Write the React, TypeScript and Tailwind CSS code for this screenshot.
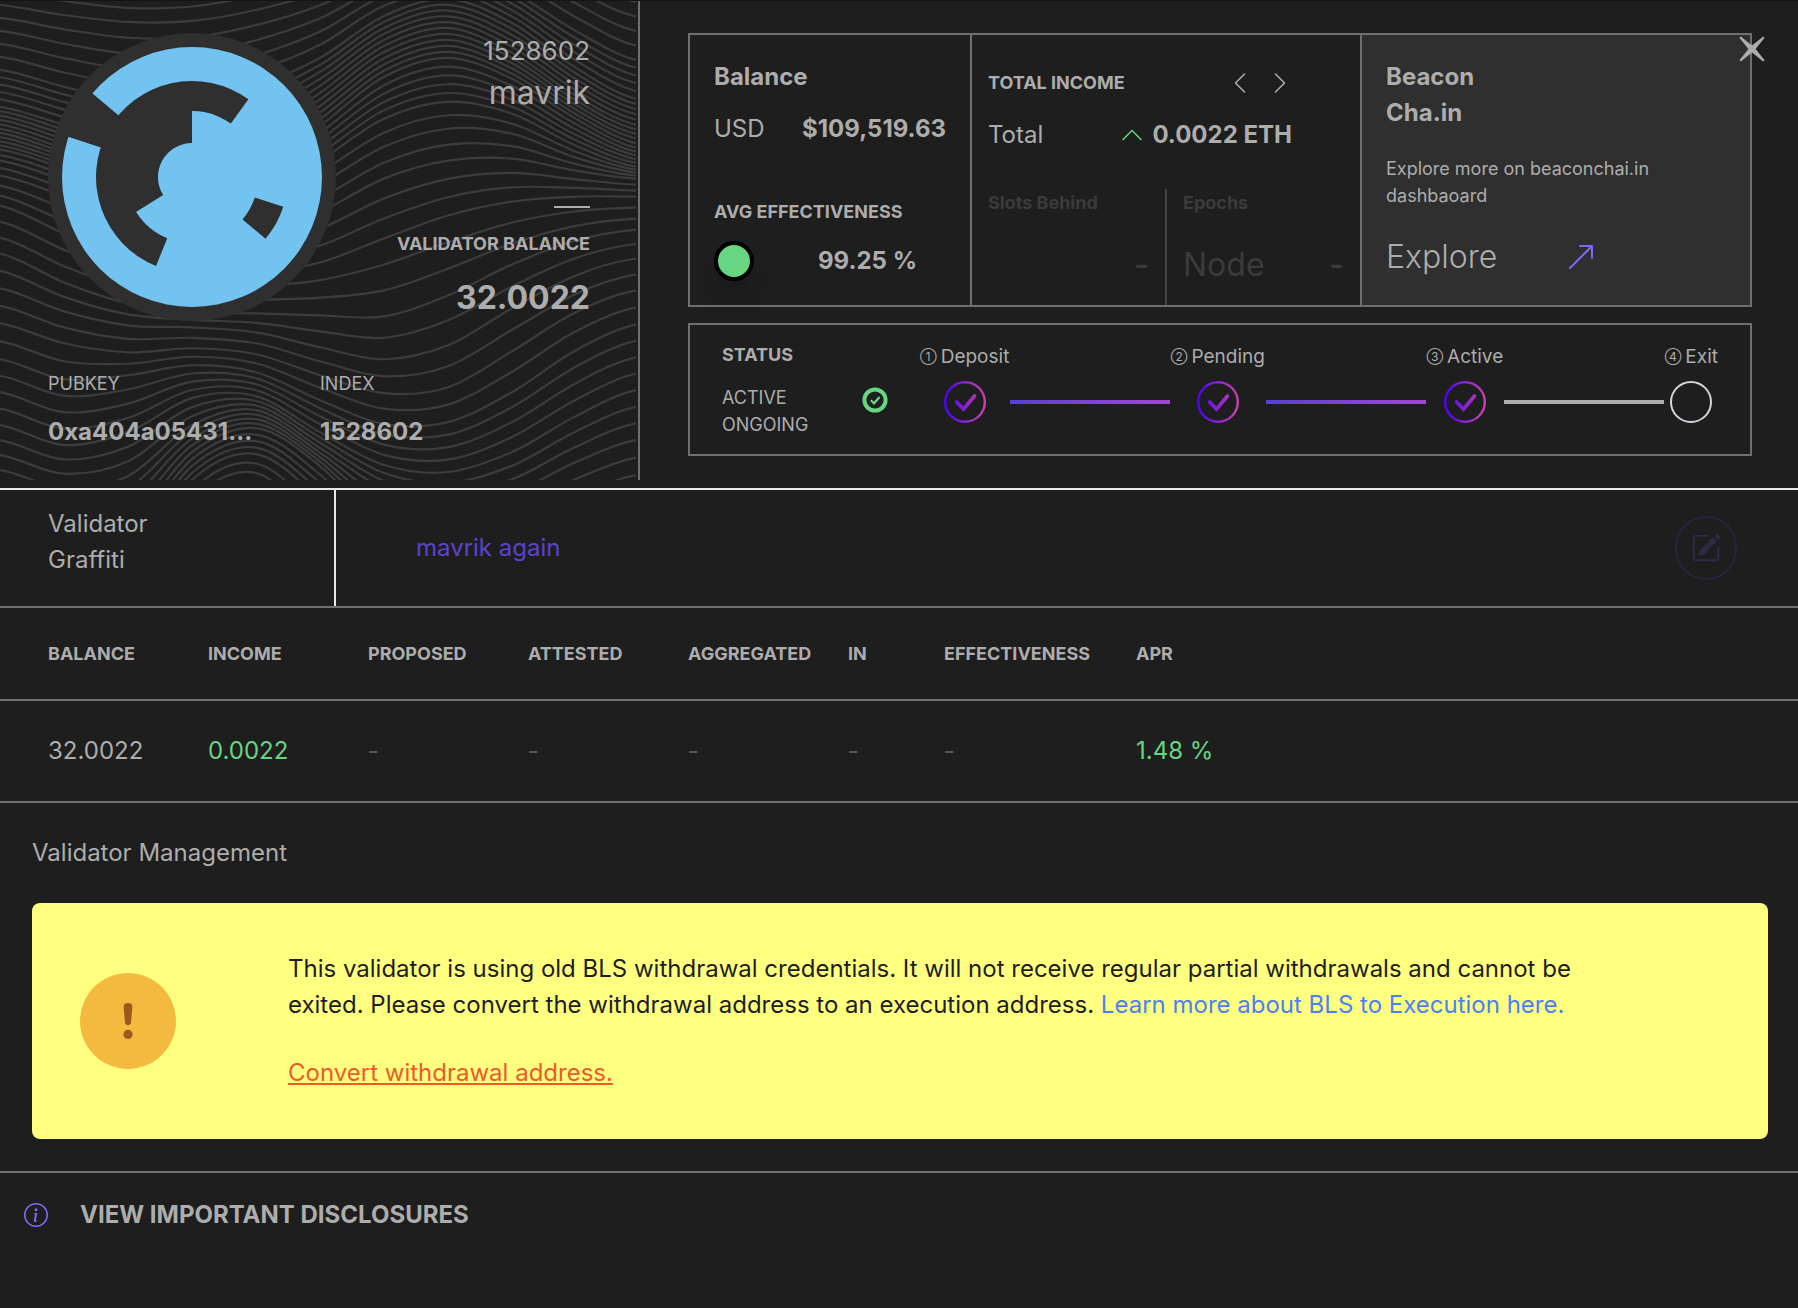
import { Fragment } from "react";
import { BsArrowUpRight, BsChevronLeft, BsChevronRight, BsChevronUp, BsInfoCircle, BsPencilSquare } from "react-icons/bs";

// [line index, height of the line at each of the WAVE_X stops]
const WAVE_X = [0, 64, 128, 192, 256, 320, 384, 448, 512, 576, 636];
const WAVE_KEYS: [number, number[]][] = [
  [-4, [-50, -42, -36, -38, -50, -68, -85, -88, -62, -25, 1]],
  [0, [4, 14, 21, 20, 9, -9, -36, -40, -10, 30, 59]],
  [5, [69, 86, 100, 102, 85, 57, 15, -2, 22, 67, 98]],
  [10, [106, 124, 142, 150, 132, 92, 45, 27, 52, 95, 124]],
  [15, [128, 148, 170, 180, 168, 125, 76, 57, 78, 118, 147]],
  [20, [149, 168, 192, 206, 198, 160, 118, 101, 113, 145, 166]],
  [22, [160, 180, 205, 222, 217, 184, 146, 128, 133, 157, 172]],
  [24, [175, 196, 225, 243, 241, 212, 178, 160, 158, 170, 178]],
  [27, [205, 233, 258, 272, 272, 262, 238, 215, 201, 196, 196]],
  [30, [253, 282, 303, 312, 313, 315, 316, 295, 264, 240, 229]],
  [32, [288, 311, 325, 327, 332, 347, 359, 345, 308, 275, 258]],
  [34, [323, 343, 352, 348, 354, 375, 393, 387, 351, 312, 290]],
  [36, [359, 379, 375, 365, 372, 400, 424, 422, 392, 350, 324]],
  [40, [425, 445, 432, 398, 396, 432, 465, 472, 452, 416, 390]],
  [43, [470, 488, 476, 425, 410, 448, 489, 505, 493, 462, 440]],
  [47, [530, 545, 525, 452, 428, 466, 530, 555, 555, 530, 510]],
  [51, [590, 600, 570, 480, 454, 500, 570, 610, 610, 595, 580]],
  [55, [650, 650, 620, 520, 492, 560, 640, 670, 670, 660, 650]],
];

function smoothPath(ys: number[]) {
  let d = `M${WAVE_X[0]} ${ys[0]}`;
  for (let i = 0; i < ys.length - 1; i++) {
    const dx = (WAVE_X[i + 1] - WAVE_X[i]) / 3;
    const before = ys[Math.max(i - 1, 0)];
    const after = ys[Math.min(i + 2, ys.length - 1)];
    const c1 = ys[i] + (ys[i + 1] - before) / 6;
    const c2 = ys[i + 1] - (after - ys[i]) / 6;
    d += `C${WAVE_X[i] + dx} ${c1.toFixed(1)} ${WAVE_X[i + 1] - dx} ${c2.toFixed(1)} ${WAVE_X[i + 1]} ${ys[i + 1].toFixed(1)}`;
  }
  return d;
}

const wavePaths = WAVE_KEYS.slice(0, -1).flatMap(([start, from], k) => {
  const [end, to] = WAVE_KEYS[k + 1];
  return Array.from({ length: end - start }, (_, n) =>
    smoothPath(from.map((y, i) => y + ((to[i] - y) * n) / (end - start)))
  );
});

function Waves() {
  return (
    <svg className="absolute inset-0 w-full h-full pr-0.5" viewBox="0 0 636 480" preserveAspectRatio="none" aria-hidden="true">
      <g fill="none" stroke="#3c3c3c" strokeWidth="2.2">
        {wavePaths.map((d, i) => (
          <path key={i} d={d} />
        ))}
      </g>
    </svg>
  );
}

// Ring segment between two angles, measured clockwise from the top
function segment(inner: number, outer: number, from: number, to: number) {
  const point = (r: number, deg: number) => {
    const a = (deg * Math.PI) / 180;
    return `${(r * Math.sin(a)).toFixed(2)} ${(-r * Math.cos(a)).toFixed(2)}`;
  };
  const large = to - from > 180 ? 1 : 0;
  return `M${point(outer, from)}A${outer} ${outer} 0 ${large} 1 ${point(outer, to)}L${point(inner, to)}A${inner} ${inner} 0 ${large} 0 ${point(inner, from)}Z`;
}

function Avatar() {
  return (
    <svg className="w-72 h-72 shrink-0" viewBox="-144 -144 288 288" role="img" aria-label="Validator avatar">
      <circle r="144" fill="#2f2f2f" />
      <circle r="130" fill="#72c3ef" />
      <g fill="#2f2f2f">
        <path d={segment(95, 131, 288, 310)} />
        <path d={segment(66, 96, 202, 396)} />
        <path d={segment(34, 67, 238, 360)} />
        <path d={segment(66, 96, 108, 130)} />
      </g>
    </svg>
  );
}

function StepIcon({ id, done }: { id: string; done: boolean }) {
  if (!done) return <div className="w-[42px] h-[42px] rounded-full border-2 border-gray-300" />;
  return (
    <svg className="w-[42px] h-[42px]" viewBox="0 0 42 42" fill="none" aria-hidden="true">
      <defs>
        <linearGradient id={id} x1="0" y1="0" x2="42" y2="0" gradientUnits="userSpaceOnUse">
          <stop stopColor="#4a00ff" />
          <stop offset="1" stopColor="#cc44aa" />
        </linearGradient>
      </defs>
      <circle cx="21" cy="21" r="19.8" stroke={`url(#${id})`} strokeWidth="2.4" />
      <path d="M12.5 21L19.5 28L30.5 15" stroke={`url(#${id})`} strokeWidth="3.6" strokeLinecap="round" />
    </svg>
  );
}

const steps = [
  { mark: "①", name: "Deposit", done: true },
  { mark: "②", name: "Pending", done: true },
  { mark: "③", name: "Active", done: true },
  { mark: "④", name: "Exit", done: false },
];

const columns = [
  { title: "BALANCE", value: "32.0022", tone: "text-[#adadad]" },
  { title: "INCOME", value: "0.0022", tone: "text-[#68d583]" },
  { title: "PROPOSED", value: "-", tone: "text-[#5a5a5a]" },
  { title: "ATTESTED", value: "-", tone: "text-[#5a5a5a]" },
  { title: "AGGREGATED", value: "-", tone: "text-[#5a5a5a]" },
  { title: "IN", value: "-", tone: "text-[#5a5a5a]" },
  { title: "EFFECTIVENESS", value: "-", tone: "text-[#5a5a5a]" },
  { title: "APR", value: "1.48 %", tone: "text-[#68d583]" },
];

function Profile() {
  return (
    <section className="relative w-[640px] shrink-0 h-[479px] border-r-2 border-[#6f6f6f] px-12 pt-8">
      <Waves />
      <div className="relative flex justify-between">
        <Avatar />
        <div className="flex flex-col items-end text-right">
          <p className="text-[26px] leading-9">1528602</p>
          <p className="text-[32px] leading-[48px]">mavrik</p>
          <div className="w-9 h-0.5 bg-[#adadad] mt-[89px]" />
          <p className="text-[18px] leading-7 font-bold mt-[22px]">VALIDATOR BALANCE</p>
          <p className="text-[32px] leading-[48px] font-bold mt-4">32.0022</p>
        </div>
      </div>
      <dl className="relative flex mt-12">
        <div className="w-[272px]">
          <dt className="text-[18px] leading-7">PUBKEY</dt>
          <dd className="text-[24px] leading-9 font-bold mt-4">0xa404a05431...</dd>
        </div>
        <div>
          <dt className="text-[18px] leading-7">INDEX</dt>
          <dd className="text-[24px] leading-9 font-bold mt-4">1528602</dd>
        </div>
      </dl>
    </section>
  );
}

function Summary() {
  return (
    <div className="flex h-[274px] border-2 border-[#6f6f6f]">
      <div className="w-[282px] shrink-0 border-r-2 border-[#6f6f6f] px-6 pt-6">
        <h2 className="text-[24px] leading-9 font-bold">Balance</h2>
        <div className="flex items-center justify-between mt-4">
          <span className="text-[24px] leading-9">USD</span>
          <span className="text-[24px] leading-9 font-bold">$109,519.63</span>
        </div>
        <h3 className="text-[18px] leading-7 font-bold mt-[51px]">AVG EFFECTIVENESS</h3>
        <div className="flex items-center gap-16 mt-[15px]">
          <div className="w-10 h-10 rounded-full border-4 border-black bg-[#68d583] shadow-xl" />
          <span className="text-[24px] leading-9 font-bold">99.25 %</span>
        </div>
      </div>
      <div className="w-[390px] shrink-0 border-r-2 border-[#6f6f6f] flex flex-col">
        <div className="flex items-center px-4 pt-[34px]">
          <h3 className="text-[18px] leading-7 font-bold grow">TOTAL INCOME</h3>
          <div className="flex gap-4 pr-[52px]">
            <button type="button" aria-label="Previous">
              <BsChevronLeft className="w-6 h-6" />
            </button>
            <button type="button" aria-label="Next">
              <BsChevronRight className="w-6 h-6" />
            </button>
          </div>
        </div>
        <div className="flex items-center px-4 mt-5">
          <span className="text-[24px] leading-9 grow">Total</span>
          <BsChevronUp className="w-6 h-6 text-[#68d583]" />
          <span className="text-[24px] leading-9 font-bold ml-2 pr-[52px]">0.0022 ETH</span>
        </div>
        <div className="flex grow mt-9 text-[#3b3b3b]">
          <div className="w-[195px] shrink-0 border-r-2 border-[#444444] px-4">
            <h4 className="text-[18px] leading-7 font-bold">Slots Behind</h4>
            <p className="text-[32px] leading-[48px] font-semibold text-right mt-6">-</p>
          </div>
          <div className="grow px-4">
            <h4 className="text-[18px] leading-7 font-bold">Epochs</h4>
            <div className="flex justify-between text-[32px] leading-[48px] mt-6">
              <span>Node</span>
              <span className="font-semibold">-</span>
            </div>
          </div>
        </div>
      </div>
      <div className="grow bg-[#2f2f2f] px-6 pt-6">
        <h2 className="text-[24px] leading-9 font-bold">
          Beacon
          <br />
          Cha.in
        </h2>
        <p className="text-[18px] leading-[27px] mt-6 max-w-[280px]">Explore more on beaconchai.in dashbaoard</p>
        <a href="#explore" className="flex items-center gap-[68px] mt-6">
          <span className="text-[32px] leading-[48px] font-light">Explore</span>
          <BsArrowUpRight className="w-8 h-8 text-[#8068f5]" />
        </a>
      </div>
    </div>
  );
}

function Status() {
  return (
    <div className="flex h-[133px] mt-4 border-2 border-[#6f6f6f] px-8">
      <div className="w-[198px] shrink-0 pt-4">
        <h3 className="text-[18px] leading-7 font-bold">STATUS</h3>
        <div className="flex items-start justify-between pr-8 mt-[15px]">
          <p className="text-[18px] leading-[27px] w-24">ACTIVE ONGOING</p>
          <svg className="w-[26px] h-[26px] mt-[3px]" viewBox="0 0 26 26" fill="none" stroke="#68d583" aria-hidden="true">
            <circle cx="13" cy="13" r="10.6" strokeWidth="4" />
            <path d="M8.8 13.2L12 16.3L17.6 10" strokeWidth="2.2" />
          </svg>
        </div>
      </div>
      <ol className="flex grow justify-between pt-[18px]">
        {steps.map((step, i) => (
          <Fragment key={step.name}>
            <li className="flex flex-col items-center shrink-0">
              <p className="flex items-center gap-1 text-[19px] leading-7 whitespace-nowrap">
                <span className="text-[12px]">{step.mark}</span>
                {step.name}
              </p>
              <div className="mt-2.5">
                <StepIcon id={`step-${i}`} done={step.done} />
              </div>
            </li>
            {i < steps.length - 1 && (
              <li
                aria-hidden="true"
                className={`h-1 w-[160px] mt-[57px] ${i < 2 ? "bg-linear-to-r from-[#5540d0] to-[#a644cc]" : "bg-[#adadad]"}`}
              />
            )}
          </Fragment>
        ))}
      </ol>
    </div>
  );
}

export default function App() {
  return (
    <main className="relative min-h-screen border-t border-[#141414] bg-[#1e1e1e] text-[#adadad] font-['Inter',sans-serif]">
      <div className="flex">
        <Profile />
        <div className="grow min-w-0 pl-12 pr-[46px] pt-8">
          <Summary />
          <Status />
        </div>
      </div>
      <button type="button" aria-label="Close" className="absolute top-[34px] right-8">
        <svg className="w-7 h-7" viewBox="0 0 28 28" fill="currentColor" aria-hidden="true">
          <path d="M2.8 1.4L14 10.4L25.2 1.4L26.6 2.8L17.6 14L26.6 25.2L25.2 26.6L14 17.6L2.8 26.6L1.4 25.2L10.4 14L1.4 2.8Z" />
        </svg>
      </button>

      <section className="flex h-[120px] mt-2 border-t-2 border-t-gray-200 border-b-2 border-b-[#6f6f6f]">
        <h2 className="w-[336px] shrink-0 border-r-2 border-gray-200 pl-12 pt-4 text-[24px] leading-9">
          Validator
          <br />
          Graffiti
        </h2>
        <div className="flex grow items-center justify-between pl-20 pr-[61px]">
          <span className="text-[24px] leading-9 text-[#5b43d0]">mavrik again</span>
          <button
            type="button"
            aria-label="Edit graffiti"
            className="flex items-center justify-center w-[62px] h-16 rounded-full border-2 border-[#28233f] text-[#302a48]"
          >
            <BsPencilSquare className="w-[30px] h-[30px]" />
          </button>
        </div>
      </section>

      <table className="w-full table-fixed text-left">
        <colgroup>
          <col className="w-[208px]" />
          <col className="w-40" />
          <col className="w-40" />
          <col className="w-40" />
          <col className="w-40" />
          <col className="w-24" />
          <col className="w-48" />
          <col />
        </colgroup>
        <thead>
          <tr className="h-[92px] border-b-2 border-[#6f6f6f]">
            {columns.map((col) => (
              <th key={col.title} className="p-0 first:pl-12 text-[18px] leading-7 font-bold">
                {col.title}
              </th>
            ))}
          </tr>
        </thead>
        <tbody>
          <tr className="h-[102px] border-b-2 border-[#6f6f6f]">
            {columns.map((col) => (
              <td key={col.title} className={`p-0 first:pl-12 text-[24px] leading-9 ${col.tone}`}>
                {col.value}
              </td>
            ))}
          </tr>
        </tbody>
      </table>

      <section className="pl-8 pr-[30px] py-8 border-b-2 border-[#6f6f6f]">
        <h2 className="text-[24px] leading-9">Validator Management</h2>
        <div className="flex items-center bg-[#ffff80] rounded-lg mt-8 p-12">
          <div className="flex items-center justify-center w-24 h-24 shrink-0 rounded-full bg-[#f4ba40]">
            <svg className="w-10 h-10" viewBox="0 0 40 40" fill="#a0561f" aria-hidden="true">
              <path d="M15.6 5.5C15.4 0.8 24.6 0.8 24.4 5.5L23 21.5C22.7 25 17.3 25 17 21.5Z" />
              <circle cx="20" cy="33.4" r="4.6" />
            </svg>
          </div>
          <div className="ml-28 max-w-[1330px] text-[24px] leading-9 text-[#1e1e1e]">
            <p>
              This validator is using old BLS withdrawal credentials. It will not receive regular partial withdrawals and cannot be
              exited. Please convert the withdrawal address to an execution address.{" "}
              <a href="#bls" className="text-[#4c82f0]">
                Learn more about BLS to Execution here.
              </a>
            </p>
            <a href="#convert" className="block w-fit mt-8 text-[#f05a28] underline">
              Convert withdrawal address.
            </a>
          </div>
        </div>
      </section>

      <button type="button" className="flex items-center gap-8 pl-6 pt-6 pb-12">
        <BsInfoCircle className="w-6 h-6 text-[#8068f5]" />
        <span className="text-[24px] leading-9 font-bold">VIEW IMPORTANT DISCLOSURES</span>
      </button>
    </main>
  );
}
